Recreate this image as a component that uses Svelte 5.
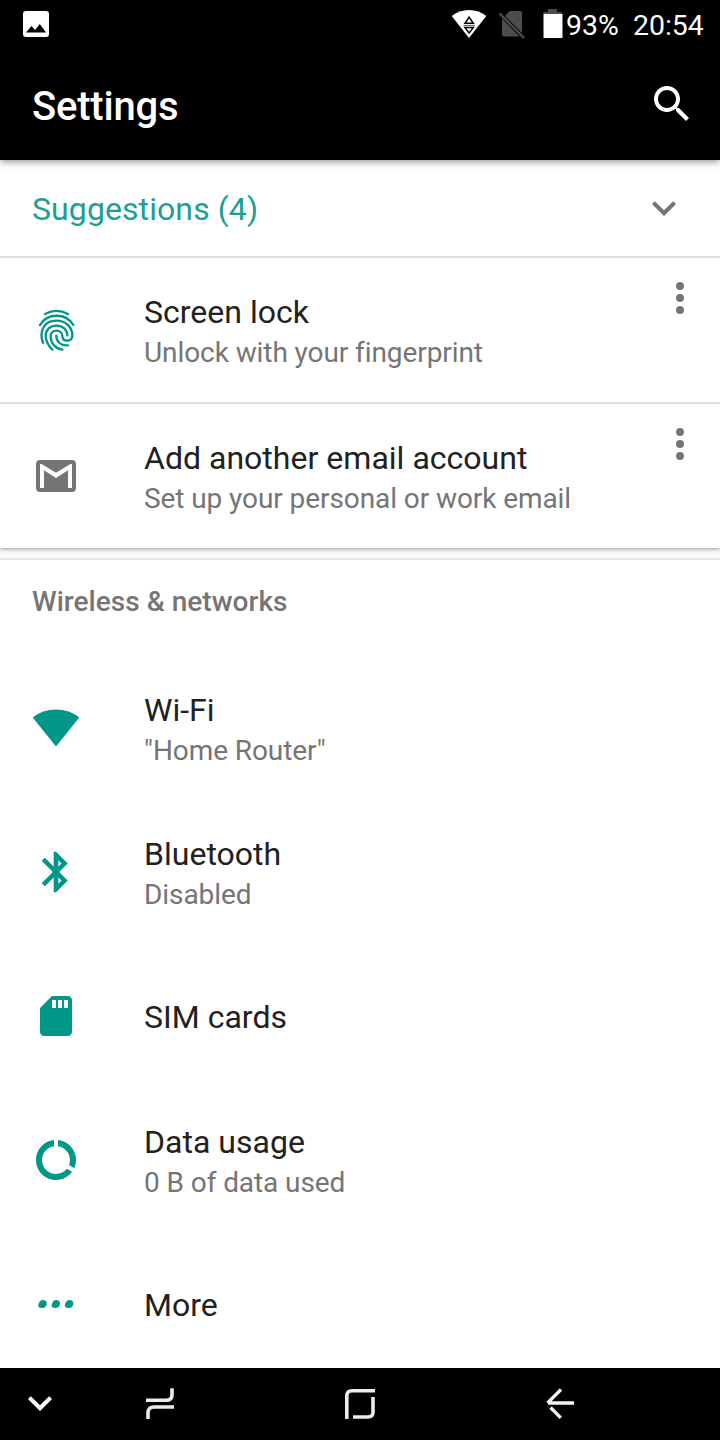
<script>
  const suggestions = [
    { icon: 'finger', title: 'Screen lock', note: 'Unlock with your fingerprint' },
    { icon: 'mail', title: 'Add another email account', note: 'Set up your personal or work email' }
  ];
  const networks = [
    { icon: 'wifi', title: 'Wi-Fi', note: '"Home Router"' },
    { icon: 'bluetooth', title: 'Bluetooth', note: 'Disabled' },
    { icon: 'sim', title: 'SIM cards' },
    { icon: 'data', title: 'Data usage', note: '0 B of data used' },
    { icon: 'more', title: 'More' }
  ];
</script>

{#snippet glyph(name)}
  {#if name === 'finger'}
    <svg class="icon" viewBox="36 48 144 144" fill="none" stroke="#009688" stroke-width="7" stroke-linecap="round">
      <path d="M75 72Q109 53 144 72M60 105C82 68 138 68 160 105" />
      <path d="M69 159C57 124 71 92 109 92C139 92 157 113 157 136C157 147 150 152 142 152C133 152 127 146 127 137C127 128 119 122 109 122C99 122 92 129 92 139C92 160 106 175 127 179" />
      <path d="M97 179C82 163 77 151 77 137C77 119 91 107 109 107C128 107 142 119 142 136M109 137C109 155 121 168 144 166" />
    </svg>
  {:else if name === 'mail'}
    <svg class="icon" viewBox="0 0 24 24"><rect x="2" y="4" width="20" height="16" rx="2" fill="#757575" /><path d="M4 18V6h.8L12 10.350 19.200 6H20v12h-2V9.150L12 13 6 9.150V18z" fill="#fff" /></svg>
  {:else if name === 'wifi'}
    <svg class="icon" viewBox="0 0 48 48" fill="#009688"><path d="M24 42.500L47.300 13.500C41 8.300 33 5.500 24 5.500S7 8.300.7 13.500z" /></svg>
  {:else if name === 'bluetooth'}
    <svg class="icon" viewBox="0 0 24 24" fill="#009688" stroke="#009688" stroke-width=".3"><path d="M17.710 7.710L12 2h-1v7.590L6.410 5 5 6.410 10.590 12 5 17.590 6.410 19 11 14.410V22h1l5.710-5.710-4.300-4.290 4.300-4.290zM13 5.830l1.880 1.880L13 9.590V5.830zm1.880 10.460L13 18.170v-3.760l1.880 1.880z" /></svg>
  {:else if name === 'sim'}
    <svg class="icon" viewBox="0 0 24 24" fill="#009688"><path d="M18 2h-8L4.020 8 4 20c0 1.100.9 2 2 2h12c1.100 0 2-.9 2-2V4c0-1.100-.9-2-2-2zm-6 6h-2V4h2v4zm3 0h-2V4h2v4zm3 0h-2V4h2v4z" /></svg>
  {:else if name === 'data'}
    <svg class="icon" viewBox="0 0 24 24" fill="#009688"><path d="M13 2.050v3.030c3.390.49 6 3.390 6 6.920 0 .9-.18 1.750-.48 2.540l2.600 1.530c.56-1.240.88-2.620.88-4.070 0-5.180-3.950-9.450-9-9.950zM12 19c-3.870 0-7-3.130-7-7 0-3.530 2.610-6.430 6-6.920V2.050c-5.060.5-9 4.760-9 9.950 0 5.520 4.470 10 9.990 10 3.310 0 6.240-1.610 8.060-4.090l-2.600-1.530C16.170 17.980 14.210 19 12 19z" /></svg>
  {:else}
    <svg class="icon" viewBox="0 0 48 48" fill="#009688">
      {#each [0, 13.300, 26.600] as dx}
        <path transform={`translate(${dx} 0)`} d="M6.300 25.500C6.500 22 8.500 20 11 20c2.200 0 3.800 1.500 3.800 3.300C14.800 26.300 12.800 28 10 28c-2 0-3.700-.7-3.700-2.500z" />
      {/each}
    </svg>
  {/if}
{/snippet}

{#snippet row(item)}
  <div class="lead">{@render glyph(item.icon)}</div>
  <div class="copy">
    <div class="title">{item.title}</div>
    {#if item.note}<div class="note">{item.note}</div>{/if}
  </div>
{/snippet}

<div class="screen">
  <header>
    <div class="status">
      <svg class="photo" width="26" height="26" viewBox="0 0 26 26"><rect width="26" height="26" rx="3" fill="#fff" /><path d="M3 21.500L8.500 15l3.500 4 4.800-6L23 21.500z" fill="#000" /></svg>
      <svg class="signal" width="36" height="30" viewBox="0 0 36 30"><path d="M18 29L35.300 7C30.500 3 24.500 1 18 1S5.500 3 .7 7z" fill="#fff" /><path d="M14 14.300h8.300L18.100 8z M14 18.600h8.300L18.100 24z" fill="#fff" stroke="#000" stroke-width="1.500" /><path d="M12.500 16.400h11.500" stroke="#555" stroke-width="1" /></svg>
      <svg class="nosim" width="28" height="30" viewBox="0 0 28 30"><path d="M8 7L12.500 2H23a2 2 0 0 1 2 2v20L8 7zM5 9.500L22.500 27.500H7a2 2 0 0 1-2-2z" fill="#4d4d4d" /><path d="M2.500 4.500l24.500 24.500" stroke="#4d4d4d" stroke-width="2.400" /></svg>
      <svg class="battery" width="20" height="30" viewBox="0 0 20 30"><path d="M.5 5V3H5V0h9v3h5v2z" fill="#4d4d4d" /><path d="M.5 5h19v24H.5z" fill="#fff" /></svg>
      <span class="charge">93%</span><span class="time">20:54</span>
    </div>
    <div class="bar">
      <h1>Settings</h1>
      <svg width="48" height="48" viewBox="0 0 24 24" fill="#fff"><path d="M15.500 14h-.79l-.28-.27C15.410 12.590 16 11.110 16 9.500 16 5.910 13.090 3 9.500 3S3 5.910 3 9.500 5.910 16 9.500 16c1.610 0 3.090-.59 4.230-1.570l.27.28v.79l5 4.990L20.490 19l-4.990-5zm-6 0C7.010 14 5 11.990 5 9.500S7.010 5 9.500 5 14 7.010 14 9.500 11.990 14 9.500 14z" /></svg>
    </div>
  </header>

  <main>
    <section class="suggestions">
      <div class="heading">
        <h2>Suggestions (4)</h2>
        <svg width="48" height="48" viewBox="0 0 24 24" fill="#757575"><path d="M7.410 8.590L12 13.170l4.590-4.580L18 10l-6 6-6-6z" /></svg>
      </div>
      {#each suggestions as item}
        <div class="row ruled">
          {@render row(item)}
          <svg class="menu" width="48" height="48" viewBox="0 0 24 24" fill="#757575"><circle cx="12" cy="6" r="2" /><circle cx="12" cy="12" r="2" /><circle cx="12" cy="18" r="2" /></svg>
        </div>
      {/each}
    </section>
    <section class="networks">
      <h3>Wireless &amp; networks</h3>
      {#each networks as item}
        <div class="row">{@render row(item)}</div>
      {/each}
    </section>
  </main>

  <nav>
    <svg class="hide" width="48" height="48" viewBox="0 0 24 24" fill="#fff"><path d="M7.410 8.590L12 13.170l4.590-4.580L18 10l-6 6-6-6z" /></svg>
    <svg class="recent" width="30" height="32" viewBox="0 0 30 32" fill="none" stroke="#ececec" stroke-width="3.600"><path d="M1 12.300h20Q27 12.300 27 7V.2M29 19H9Q3 19 3 25v6" /></svg>
    <svg class="home" width="30" height="30" viewBox="0 0 30 30" fill="none" stroke="#ececec" stroke-width="3.600"><path d="M1.800 30V7Q1.800 1.800 7 1.800h23M28 8v15q0 5-5 5H8" /></svg>
    <svg class="back" width="30" height="32" viewBox="0 0 30 32" fill="none" stroke="#f5f5f5" stroke-width="3.300"><path d="M29 16H3M16 2.500L2.500 16M5.500 20.500l10.300 10.300" /></svg>
  </nav>
</div>

<style>
  :global(body) { margin: 0; background: #000; }
  .screen { width: 720px; height: 1440px; display: flex; flex-direction: column; overflow: hidden; font-family: Roboto, sans-serif; background: #fafafa; }
  svg { display: block; flex: none; }
  h1, h2, h3 { margin: 0; font-weight: 400; }
  header { height: 160px; flex: none; background: #000; color: #fff; box-shadow: 0 1px 8px rgba(0, 0, 0, .5); z-index: 2; }
  .status { height: 48px; display: flex; align-items: flex-start; font-size: 28.400px; line-height: 34px; }
  .photo { margin: 11px 0 0 23px; }
  .signal { margin: 9px 0 0 402px; }
  .nosim { margin: 9px 0 0 10px; }
  .battery { margin: 9px 0 0 17.500px; }
  .charge { margin: 9px 0 0 3.500px; width: 67px; }
  .time { margin-top: 9px; white-space: nowrap; }
  .bar { height: 112px; display: flex; align-items: center; justify-content: space-between; padding: 0 24px 0 32px; }
  h1 { font-size: 40px; line-height: 48px; font-weight: 500; padding-top: 6px; letter-spacing: -.22px; }
  main { flex: 1; min-height: 0; overflow: hidden; }
  .suggestions { background: #fff; box-shadow: 0 1px 4px rgba(0, 0, 0, .4); }
  .heading { height: 96px; display: flex; align-items: center; justify-content: space-between; padding: 0 32px; }
  h2 { color: #1aa193; font-size: 32px; line-height: 38px; padding-top: 2px; letter-spacing: .09px; }
  .row { height: 144px; display: flex; align-items: center; padding-left: 32px; background: #fff; }
  .ruled { border-top: 2px solid #dedede; }
  .lead { width: 112px; flex: none; }
  .icon { width: 48px; height: 48px; }
  .copy { flex: 1; white-space: nowrap; padding-top: 2px; }
  .title { font-size: 32px; line-height: 42px; color: #212121; letter-spacing: .02px; }
  .note { font-size: 28px; line-height: 38px; color: #757575; padding-top: 1px; margin-bottom: -1px; letter-spacing: -.08px; }
  .menu { align-self: flex-start; margin: 16px 16px 0 0; }
  .networks { margin-top: 10px; border-top: 2px solid #e6e6e6; background: #fff; }
  h3 { height: 84px; line-height: 84px; padding: 0 32px 12px; font-size: 28px; font-weight: 500; color: #757575; letter-spacing: .04px; }
  nav { height: 72px; flex: none; display: flex; background: #000; }
  .hide { margin: 11px 0 0 16px; }
  .recent { margin: 20px 0 0 81px; }
  .home { margin: 21px 0 0 170px; }
  .back { margin: 19px 0 0 170px; }
</style>
